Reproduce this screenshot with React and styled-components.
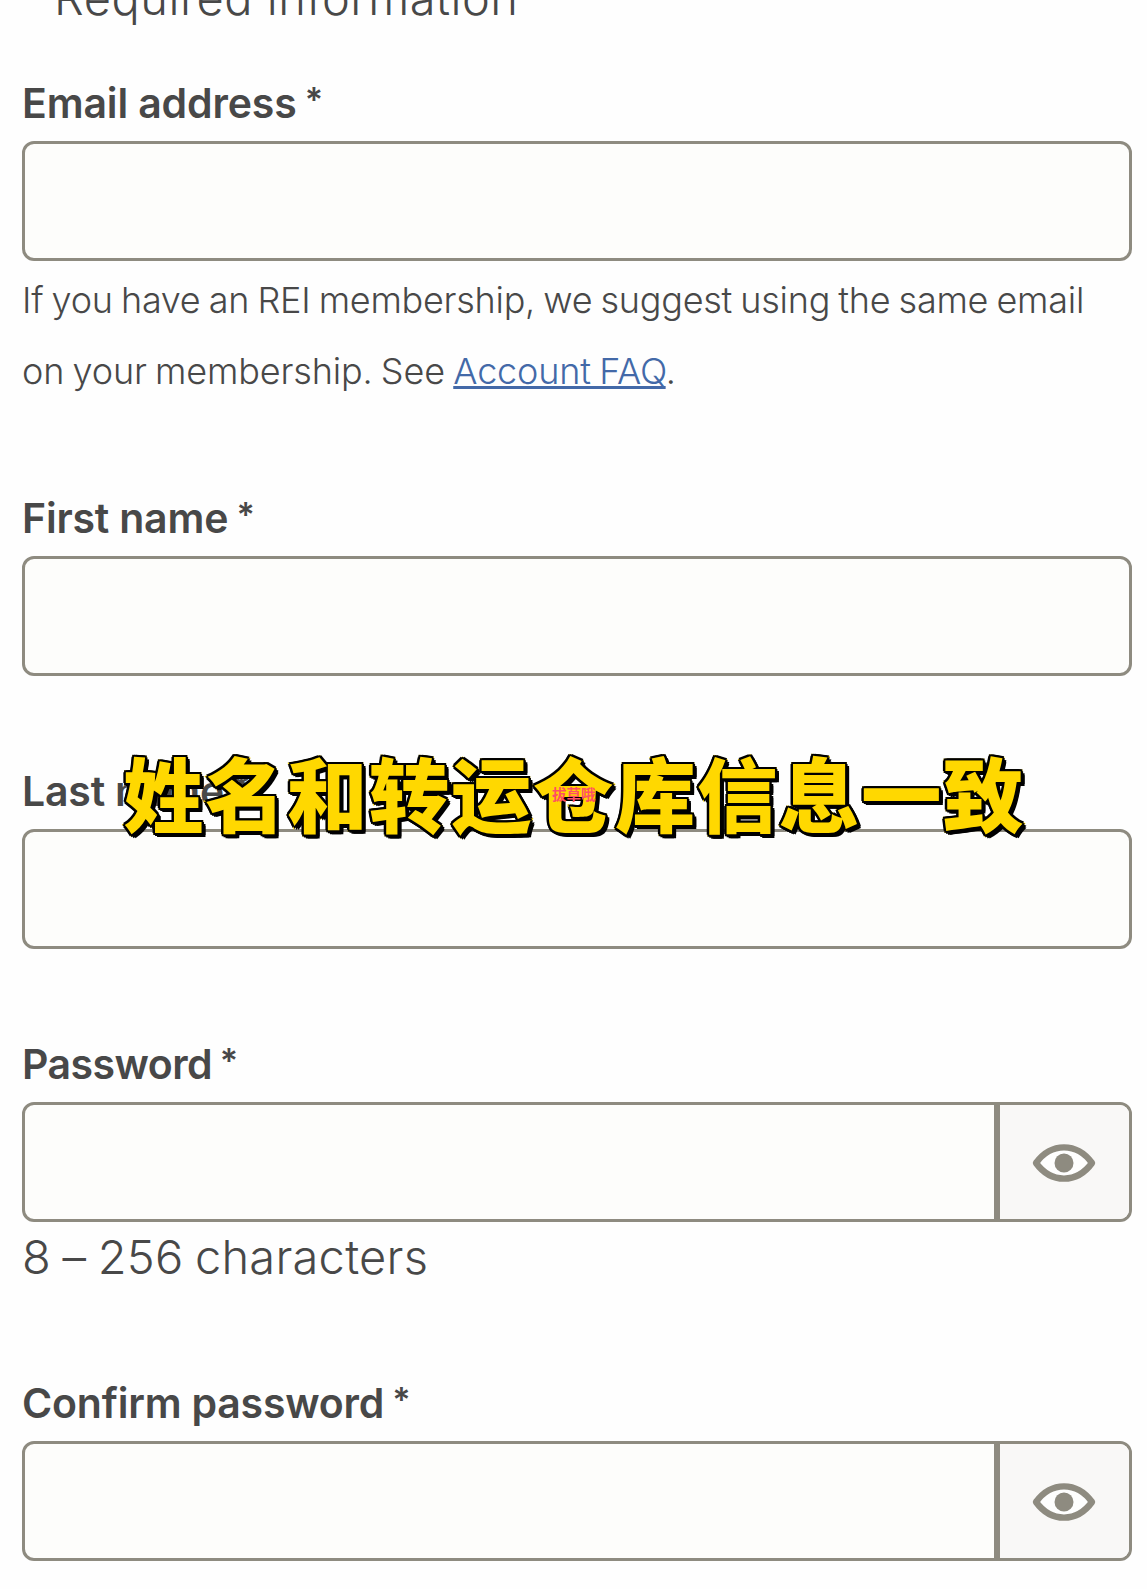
import React from 'react';
import styled, { createGlobalStyle } from 'styled-components';

const GlobalStyle = createGlobalStyle`
  *, *::before, *::after {
    box-sizing: border-box;
  }

  body {
    margin: 0;
    background: #fefefe;
    color: #484848;
    font-family: Inter, 'Liberation Sans', sans-serif;
  }
`;

const Page = styled.main`
  display: flex;
  flex-direction: column;
  position: relative;
  width: 1147px;
  height: 1589px;
  padding: 0 15px 0 22px;
  overflow: hidden;
`;

const Legend = styled.p`
  flex: none;
  height: 60px;
  margin: -32px 0 47px 32px;
  font-size: 47px;
  font-weight: 340;
  line-height: 60px;
  letter-spacing: 0.5px;
`;

const Field = styled.div`
  display: flex;
  flex: none;
  flex-direction: column;
  height: ${({ $height }) => $height}px;
`;

const Label = styled.label`
  height: 66px;
  padding-top: 2px;
  font-size: 41px;
  font-weight: 630;
  line-height: 52px;
  white-space: nowrap;
  letter-spacing: ${({ $tracking }) => $tracking}px;
`;

const Star = styled.span`
  margin-left: -2px;
  font-size: 34px;
  line-height: 1;
  vertical-align: 6px;
`;

const InputGroup = styled.div`
  display: flex;
  flex: none;
  height: 120px;
  overflow: hidden;
  border: 3px solid #8e8b80;
  border-radius: 12px;
  background: #fdfdfb;
`;

const Input = styled.input`
  flex: 1;
  min-width: 0;
  padding: 0 24px;
  border: 0;
  outline: 0;
  background: transparent;
  font: inherit;
`;

const Toggle = styled.button`
  display: flex;
  align-items: center;
  justify-content: center;
  width: 135px;
  padding: 1px 1px 0 0;
  border: 0;
  border-left: 6px solid #8e8b80;
  background: #f9f8f7;
`;

const Help = styled.p`
  margin: 4px 0 0;
  font-size: 36px;
  font-weight: 340;
  line-height: 71px;
  white-space: nowrap;
  word-spacing: -1.6px;
`;

const HelpLine = styled.span`
  display: block;
  letter-spacing: ${({ $tracking }) => $tracking}px;
`;

const Link = styled.a`
  color: #4369a8;
  text-decoration: underline;
  text-decoration-thickness: 3px;
  text-underline-offset: 2px;
  text-decoration-skip-ink: none;
`;

const Hint = styled.p`
  margin: 5px 0 0;
  font-size: 47px;
  font-weight: 340;
  line-height: 60px;
  letter-spacing: 0.25px;
  word-spacing: -2px;
`;

// Yellow stroke fattens the glyphs, the shadow ring draws the outline
const Caption = styled.div`
  position: absolute;
  top: 731px;
  left: 123px;
  color: #ffd800;
  font-family: 'Noto Sans CJK SC', sans-serif;
  font-size: 80.5px;
  font-weight: 900;
  line-height: 120px;
  letter-spacing: 1.5px;
  white-space: nowrap;
  -webkit-text-stroke: 3.5px #ffd800;
  paint-order: stroke fill;
  text-shadow:
    2.5px 0 0 #000,
    -2.5px 0 0 #000,
    0 2.5px 0 #000,
    0 -2.5px 0 #000,
    1.8px 1.8px 0 #000,
    -1.8px 1.8px 0 #000,
    1.8px -1.8px 0 #000,
    -1.8px -1.8px 0 #000,
    4px 2px 0 #000,
    2px 4px 0 #000,
    4px 4px 0 #000;
`;

const Watermark = styled.div`
  position: absolute;
  top: 784px;
  left: 552px;
  color: #ff4f62;
  font-family: 'Noto Sans CJK SC', sans-serif;
  font-size: 14.5px;
  font-weight: 700;
  line-height: 20px;
  white-space: nowrap;
`;

function EyeIcon() {
  return (
    <svg width="64" height="40" viewBox="0 0 64 40" aria-hidden="true">
      <path
        d="M4 20C12 9 21.500 4.400 32 4.400S52 9 60 20C52 31 42.500 35.600 32 35.600S12 31 4 20Z"
        fill="#fefefe"
        stroke="#8e8b80"
        strokeWidth="6.4"
        strokeLinejoin="round"
      />
      <circle cx="32" cy="20" r="9.5" fill="#8e8b80" />
    </svg>
  );
}

function TextField({ id, label, tracking, height, type = 'text', children }) {
  return (
    <Field $height={height}>
      <Label htmlFor={id} $tracking={tracking}>
        {label} <Star>*</Star>
      </Label>
      <InputGroup>
        <Input id={id} type={type} />
        {type === 'password' && (
          <Toggle type="button" aria-label="Show password">
            <EyeIcon />
          </Toggle>
        )}
      </InputGroup>
      {children}
    </Field>
  );
}

function App() {
  return (
    <>
      <GlobalStyle />
      <Page>
        <Legend>Required information</Legend>
        <TextField id="email" label="Email address" tracking={-0.15} height={415}>
          <Help>
            <HelpLine $tracking={-0.26}>If you have an REI membership, we suggest using the same email</HelpLine>
            <HelpLine $tracking={-0.16}>
              on your membership. See <Link href="#faq">Account FAQ</Link>.
            </HelpLine>
          </Help>
        </TextField>
        <TextField id="first-name" label="First name" tracking={-0.2} height={273} />
        <TextField id="last-name" label="Last name" tracking={-0.2} height={273} />
        <TextField id="password" label="Password" tracking={-0.55} height={339} type="password">
          <Hint>8 – 256 characters</Hint>
        </TextField>
        <TextField id="confirm-password" label="Confirm password" tracking={-0.2} height={186} type="password" />
        <Caption>姓名和转运仓库信息一致</Caption>
        <Watermark>拔草哦</Watermark>
      </Page>
    </>
  );
}

export default App;
